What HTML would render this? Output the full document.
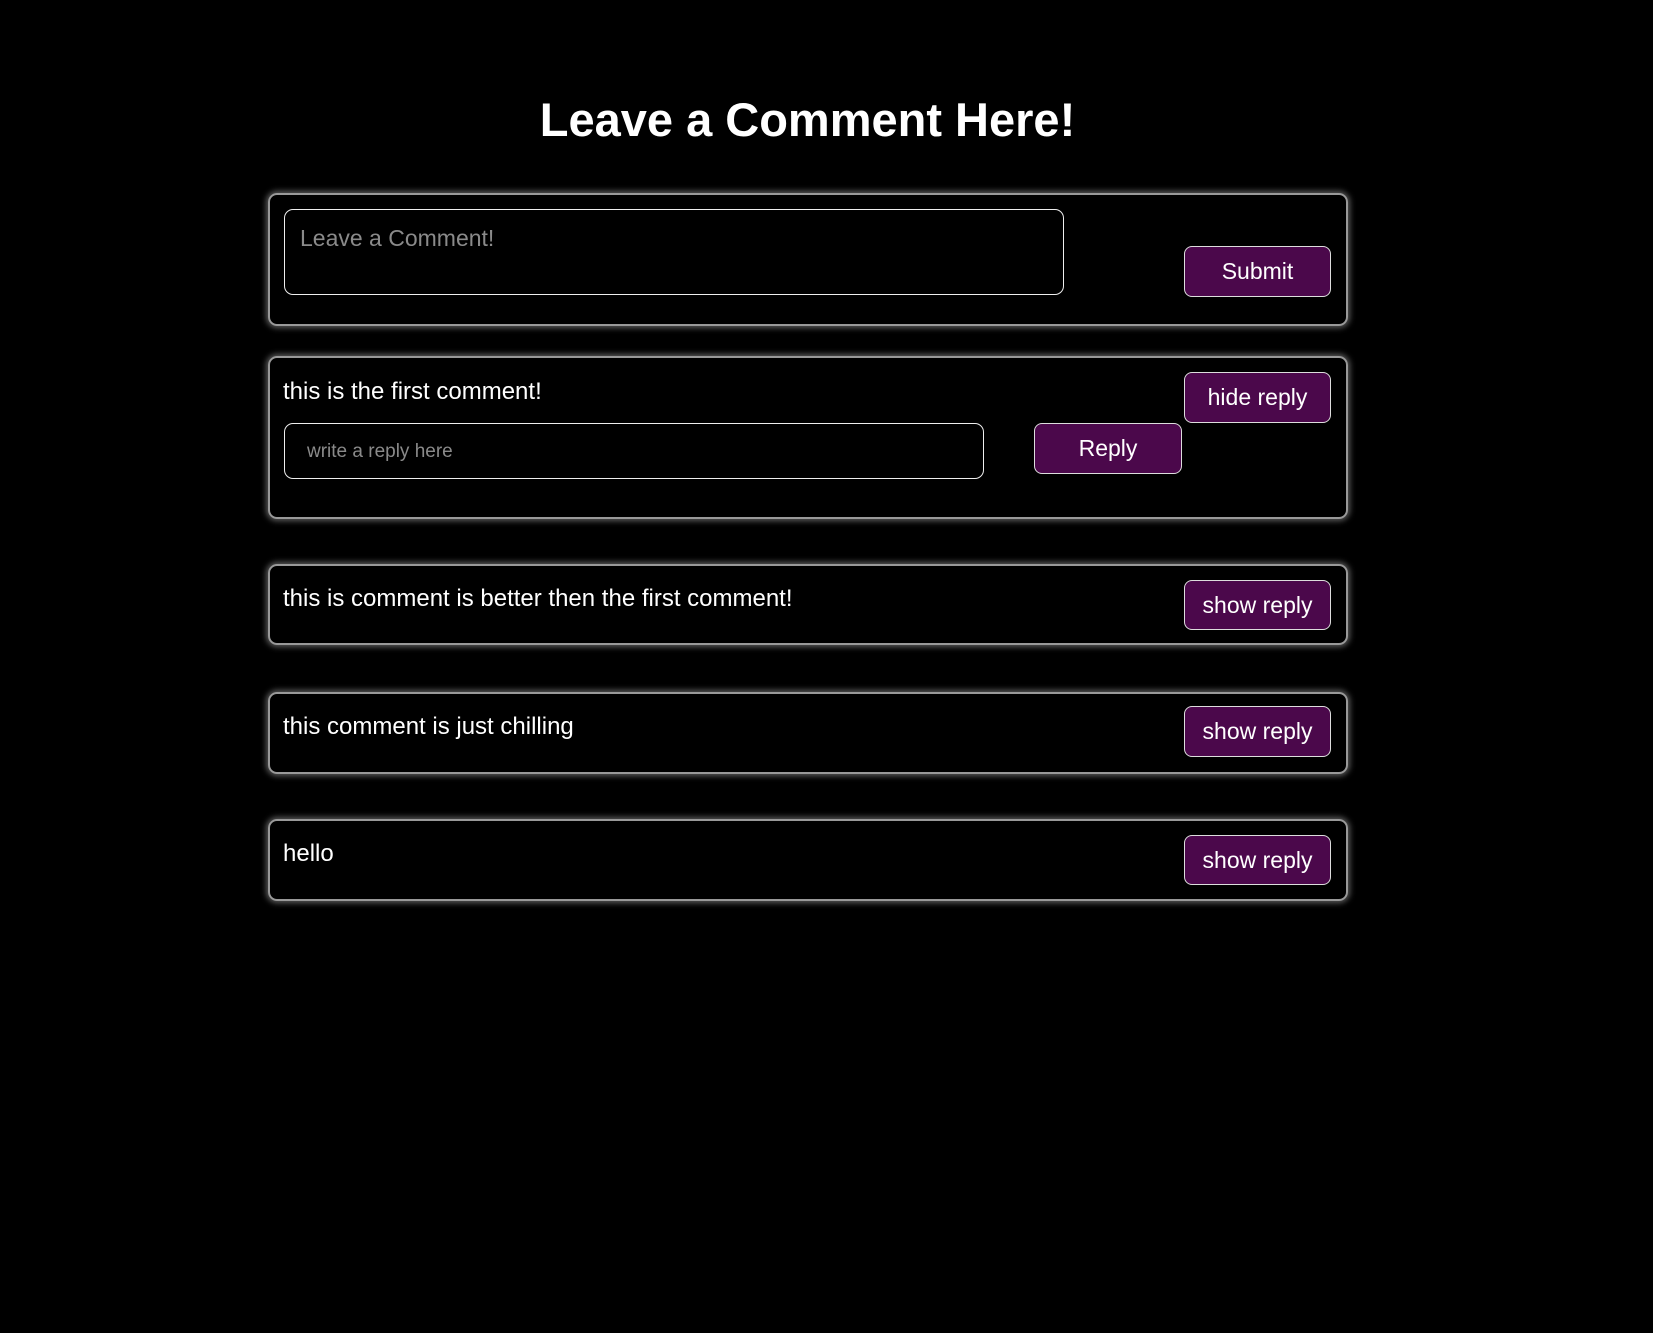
<!DOCTYPE html>
<html><head><style>
body{margin:0;background:#000;width:1653px;height:1333px;position:relative;font-family:"Liberation Sans",sans-serif;color:#fff;overflow:hidden}
.a{position:absolute;box-sizing:border-box}
h1{position:absolute;left:-19px;width:1653px;top:90px;margin:0;text-align:center;font-size:47px;font-weight:bold;line-height:60px}
.card{border:2px solid #999;border-radius:9px;box-shadow:0 0 6px 2px rgba(180,180,180,.5);left:268px;width:1080px}
.btn{background:#4b084b;border:1.5px solid #ddd;border-radius:8px;color:#fff;font-size:23px;display:flex;align-items:center;justify-content:center}
.in{border:1.5px solid #eee;border-radius:9px;color:#8a8a8a}
.t{font-size:24px;line-height:28px}
</style></head><body>
<h1>Leave a Comment Here!</h1>
<div class="a card" style="top:193px;height:133px"></div>
<div class="a in" style="left:284px;top:209px;width:780px;height:86px;font-size:23px;padding:15px 15px">Leave a Comment!</div>
<div class="a btn" style="left:1184px;top:246px;width:147px;height:51px">Submit</div>

<div class="a card" style="top:356px;height:163px"></div>
<div class="a t" style="left:283px;top:378px">this is the first comment!</div>
<div class="a in" style="left:284px;top:423px;width:700px;height:56px;font-size:19px;padding:17px 22px">write a reply here</div>
<div class="a btn" style="left:1034px;top:423px;width:148px;height:51px">Reply</div>
<div class="a btn" style="left:1184px;top:372px;width:147px;height:51px">hide reply</div>

<div class="a card" style="top:564px;height:81px"></div>
<div class="a t" style="left:283px;top:585px">this is comment is better then the first comment!</div>
<div class="a btn" style="left:1184px;top:580px;width:147px;height:50px">show reply</div>

<div class="a card" style="top:692px;height:82px"></div>
<div class="a t" style="left:283px;top:713px">this comment is just chilling</div>
<div class="a btn" style="left:1184px;top:706px;width:147px;height:51px">show reply</div>

<div class="a card" style="top:819px;height:82px"></div>
<div class="a t" style="left:283px;top:840px">hello</div>
<div class="a btn" style="left:1184px;top:835px;width:147px;height:50px">show reply</div>
</body></html>
